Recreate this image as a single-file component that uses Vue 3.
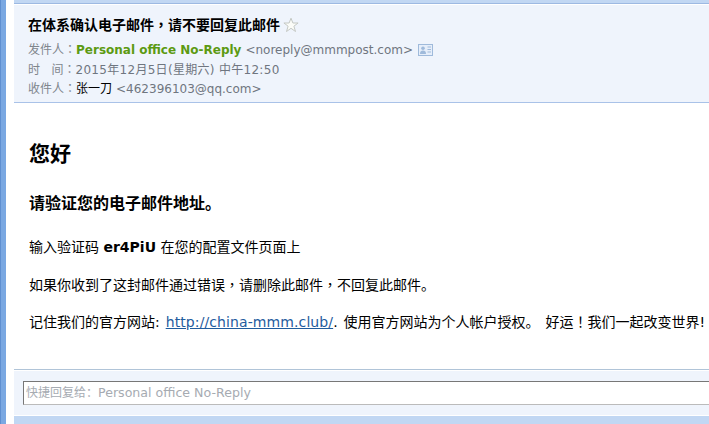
<script setup>
const replyTo = 'Personal office No-Reply'
</script>

<template>
  <div class="page">
    <div class="rail"></div>
    <div class="main">
      <div class="top-strip"></div>
      <header class="head">
        <div class="subject">
          <span>在体系确认电子邮件<i class="pn">，</i>请不要回复此邮件</span>
          <svg class="star" width="16" height="16" viewBox="0 0 16 16">
            <path d="M8 1.200 9.900 6h5.200l-4.200 3.200 1.600 5.300L8 11.300l-4.500 3.200 1.600-5.300L.9 6h5.200z" fill="#fbfcf8" stroke="#c4c8c4" stroke-width="1"/>
          </svg>
        </div>
        <div class="meta first">
          <span class="lab">发件人<i class="pn">：</i></span><b class="sender">{{ replyTo }}</b>
          <span class="addr gap">&lt;noreply@mmmpost.com&gt;</span>
          <svg class="card" width="15" height="12" viewBox="0 0 15 12">
            <rect x=".5" y=".5" width="14" height="11" fill="#e6eefa" stroke="#9fbadb"/>
            <circle cx="5" cy="4.200" r="1.800" fill="#9fbadb"/>
            <path d="M2 10c0-2.400 1.200-3.400 3-3.400S8 7.600 8 10z" fill="#9fbadb"/>
            <path d="M9.500 3h3.500M9.500 5.500h3.500M9.500 8h3.500" stroke="#9fbadb"/>
          </svg>
        </div>
        <div class="meta">
          <span class="lab">时&nbsp;&nbsp;&nbsp;间<i class="pn">：</i></span><span class="addr wide">2015年12月5日(星期六) 中午12:50</span>
        </div>
        <div class="meta">
          <span class="lab">收件人<i class="pn">：</i></span><span class="name">张一刀</span>
          <span class="addr gap">&lt;462396103@qq.com&gt;</span>
        </div>
      </header>

      <section class="body">
        <h1>您好</h1>
        <h2>请验证您的电子邮件地址。</h2>
        <p>输入验证码 <b>er4PiU</b> 在您的配置文件页面上</p>
        <p>如果你收到了这封邮件通过错误<i class="pn">，</i>请删除此邮件<i class="pn">，</i>不回复此邮件。</p>
        <p class="spaced">记住我们的官方网站: <a>http://china-mmm.club/</a>. 使用官方网站为个人帐户授权。 好运<i class="pn">！</i>我们一起改变世界!</p>
      </section>

      <footer class="reply">
        <div class="input">快捷回复给：<span class="to">{{ replyTo }}</span></div>
      </footer>
      <div class="bottom-strip"></div>
    </div>
  </div>
</template>

<style scoped>
.page {
  width: 709px;
  height: 424px;
  display: flex;
  overflow: hidden;
  background: #fff;
  color: #000;
  font-family: "DejaVu Sans", "Noto Sans CJK SC", sans-serif;
}
.pn {
  font-style: normal;
  font-family: "Noto Sans CJK TC", sans-serif;
}
.rail {
  width: 6px;
  flex: none;
  background: #7aa8e2;
  border-left: 1px solid #5f8fd0;
  box-sizing: border-box;
}
.main {
  margin-left: 8px;
  flex: 1;
  min-width: 0;
  display: flex;
  flex-direction: column;
}
.top-strip {
  height: 4px;
  flex: none;
  background: #c1d7f3;
  border-bottom: 1px solid #9db9e2;
  box-sizing: border-box;
}
.head {
  margin-top: 1px;
  height: 98px;
  flex: none;
  box-sizing: border-box;
  padding: 9px 0 0 14px;
  background: #eff4fc;
  border-bottom: 1px solid #a9c2e8;
}
.subject {
  display: flex;
  align-items: center;
  gap: 3px;
  height: 20px;
  font-size: 14px;
  font-weight: 700;
  white-space: nowrap;
}
.star { margin-top: 1px; }
.meta {
  height: 19.500px;
  line-height: 20px;
  font-size: 12px;
  white-space: nowrap;
  color: #6f7a82;
}
.first { margin-top: 5px; }
.lab { color: #80868c; }
.sender { color: #5c9a12; }
.addr { color: #6f7680; }
.gap { margin-left: 4px; }
.wide { letter-spacing: .3px; }
.name { color: #000; }
.card { margin-left: 5px; vertical-align: -2px; }
.body {
  flex: 1;
  min-height: 0;
  padding-left: 15px;
  white-space: nowrap;
  overflow: hidden;
}
h1 {
  margin: 38px 0 0;
  font-size: 21px;
  line-height: 26px;
}
h2 {
  margin: 27px 0 0;
  font-size: 16px;
  line-height: 20px;
}
p {
  margin: 18.500px 0 0;
  font-size: 14px;
  line-height: 18px;
}
h2 + p { margin-top: 24px; }
.spaced { word-spacing: 1.500px; }
a { color: #1f5c9e; text-decoration: underline; letter-spacing: .1px; }
.reply {
  flex: none;
  height: 47px;
  box-sizing: border-box;
  padding: 11px 0 10px 9px;
  background: #eff4fc;
  border-top: 1px solid #b0c4d8;
  box-shadow: inset 0 1px 0 #fff;
  border-bottom: 1px solid #fff;
}
.input {
  height: 24px;
  box-sizing: border-box;
  margin-right: -2px;
  padding-left: 2px;
  line-height: 21px;
  font-size: 12px;
  color: #a6abb2;
  background: #fff;
  border: 1px solid #bbb;
  border-top-color: #777;
  border-left-color: #777;
  white-space: nowrap;
}
.to { font-size: 12.600px; }
.bottom-strip {
  height: 8px;
  flex: none;
  background: #c1d7f3;
}
</style>
